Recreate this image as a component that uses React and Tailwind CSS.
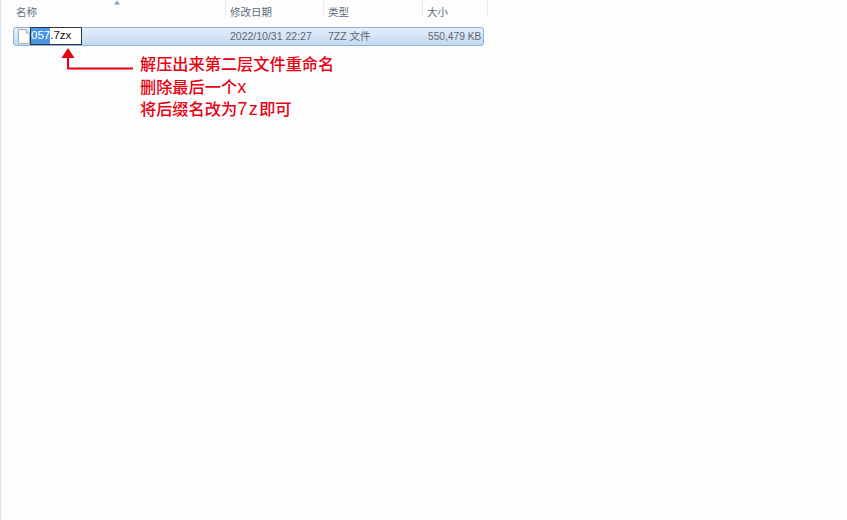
export default function App() {
  const divider = "w-px h-[16px] bg-[#e6ebf1]";
  return (
    <div className="relative w-[847px] h-[520px] overflow-hidden bg-[#fdfdfd] border-l border-[#d3e3f5] font-['Liberation_Sans','Noto_Sans_CJK_SC',sans-serif] text-[10.5px] text-[#5d6b7e]">
      <div className="flex h-[27px]">
        <div className="relative w-[224px] pl-[15px] pt-[5px] leading-[14px] h-[21px]">
          名称
          <svg className="absolute left-[112px] top-[0px]" width="8" height="5" viewBox="0 0 8 5">
            <path d="M4 0.5 L7 4.5 H1 Z" fill="#7f9fc2" />
          </svg>
        </div>
        <div className={divider} />
        <div className="w-[97px] pl-[4px] pt-[5px] leading-[14px]">修改日期</div>
        <div className={divider} />
        <div className="w-[98px] pl-[4px] pt-[5px] leading-[14px]">类型</div>
        <div className={divider} />
        <div className="w-[64px] pl-[4px] pt-[5px] leading-[14px]">大小</div>
        <div className={divider} />
      </div>

      <div className="ml-[12px] w-[471px] h-[19px] flex items-center rounded-[3px] border border-[#8fb2d8] bg-gradient-to-b from-[#e4eefb] to-[#c3d9f3] text-[#5f6770]">
        <div className="w-[16px] flex justify-end shrink-0">
          <svg width="12" height="15" viewBox="0 0 12 15">
            <path d="M0.5 0.5 H8 L11.5 4 V14.5 H0.5 Z" fill="#fbfbfb" stroke="#a9adb3" />
            <path d="M8 0.5 V4 H11.5" fill="#e8e8e8" stroke="#a9adb3" />
          </svg>
        </div>
        <div className="h-[18px] w-[52px] flex items-center border-[1.5px] border-[#2d3640] bg-white text-[11.5px] text-[#111] shrink-0 -mt-[1px]">
          <span className="bg-[#4a97e8] text-white h-full flex items-center">057</span>
          <span>.7zx</span>
        </div>
        <span className="ml-[148px] w-[98px] shrink-0">2022/10/31 22:27</span>
        <span className="w-[100px] shrink-0">7ZZ 文件</span>
        <span className="w-[52px] shrink-0 whitespace-nowrap text-[10.2px]">550,479 KB</span>
      </div>

      <svg className="absolute left-[60px] top-[47px]" width="75" height="24" viewBox="0 0 75 24">
        <path d="M7 1 L13.5 11 H0.5 Z" fill="#e60012" />
        <path d="M7 10 V21.5 H72" fill="none" stroke="#e60012" strokeWidth="2" />
      </svg>

      <div className="absolute left-[139px] top-[53px] text-[16.2px] leading-[22.5px] text-[#e60012] whitespace-nowrap font-medium">
        <div>解压出来第二层文件重命名</div>
        <div>删除最后一个<span className="text-[18px]">x</span></div>
        <div>将后缀名改为<span className="text-[18px] tracking-[1.5px]">7z</span>即可</div>
      </div>
    </div>
  );
}
